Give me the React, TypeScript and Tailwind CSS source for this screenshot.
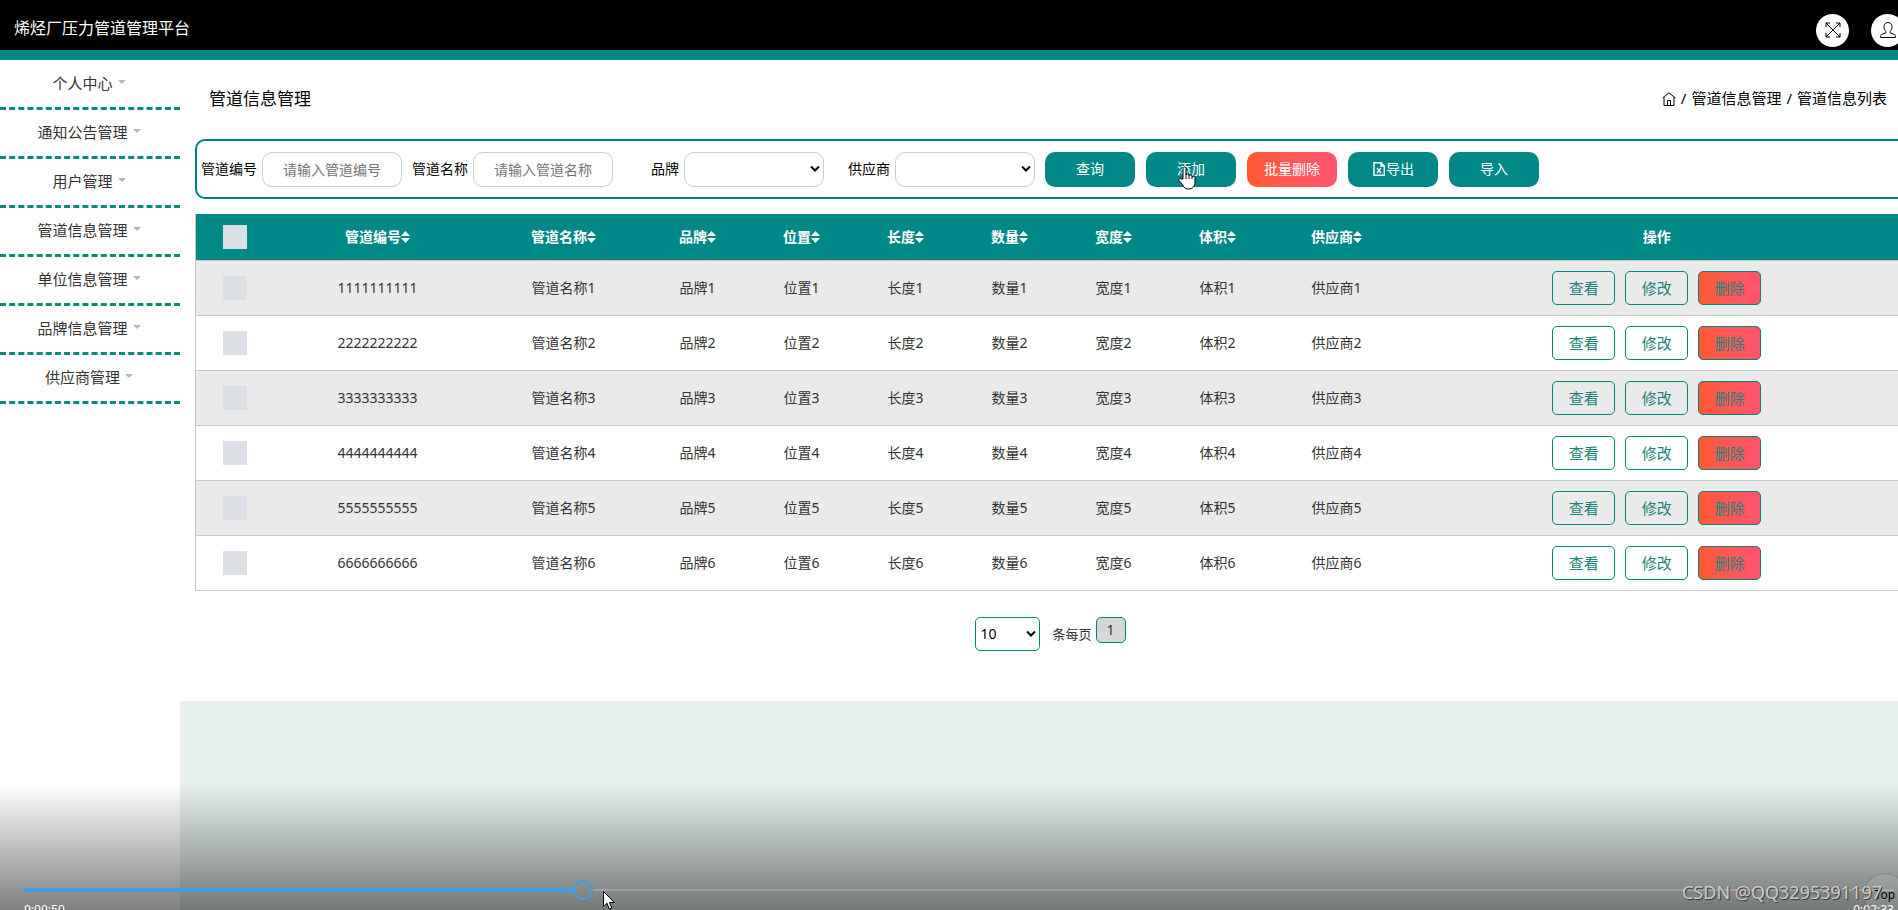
import { useState } from 'react';

const MENU = [
  '个人中心',
  '通知公告管理',
  '用户管理',
  '管道信息管理',
  '单位信息管理',
  '品牌信息管理',
  '供应商管理',
];

const COLUMNS = [
  { label: '管道编号', width: 'w-[208px]' },
  { label: '管道名称', width: 'w-[164px]' },
  { label: '品牌', width: 'w-[104px]' },
  { label: '位置', width: 'w-[104px]' },
  { label: '长度', width: 'w-[104px]' },
  { label: '数量', width: 'w-[104px]' },
  { label: '宽度', width: 'w-[104px]' },
  { label: '体积', width: 'w-[104px]' },
  { label: '供应商', width: 'w-[134px]' },
];

const ROWS = [1, 2, 3, 4, 5, 6];

const fieldClass = 'h-[35px] w-[140px] rounded-[10px] border border-[#ccc] bg-white text-sm';
const buttonClass =
  'flex h-[35px] w-[90px] items-center justify-center rounded-[10px] bg-[#008888] text-sm text-white';
const rowButtonClass =
  'h-[34px] w-[63px] rounded-[5px] border border-[#008578] text-[15px] leading-5 text-[#1c8379]';

const Caret = () => (
  <svg viewBox="0 0 8 4" className="mb-0.5 h-1 w-2 fill-[#b5b5b5]">
    <path d="M0 0h8L4 4z" />
  </svg>
);

const SortIcon = () => (
  <svg viewBox="0 0 9 12" className="h-3 w-[9px] fill-white">
    <path d="M4.5 0 9 5H0zM4.5 12 0 7h9z" />
  </svg>
);

const Chevron = () => (
  <svg
    viewBox="0 0 10 7"
    className="pointer-events-none absolute top-1/2 right-1 h-[7px] w-[10px] -translate-y-1/2 fill-none stroke-black stroke-2"
  >
    <path d="M1 1l4 4 4-4" />
  </svg>
);

const Header = () => (
  <header className="flex h-[60px] items-center justify-between border-b-10 border-[#008888] bg-black pl-3.5">
    <h1 className="pt-1.5 text-base text-white">烯烃厂压力管道管理平台</h1>
    <div className="-mr-1.5 flex shrink-0 gap-[22px] pt-[10px]">
      <button aria-label="全屏" className="flex size-[33px] items-center justify-center rounded-full bg-white">
        <svg viewBox="0 0 16 16" className="size-4 fill-none stroke-black">
          <path d="M1 5V1h4M11 1h4v4M15 11v4h-4M5 15H1v-4M1 1l14 14M15 1 1 15" />
        </svg>
      </button>
      <button aria-label="用户" className="flex size-[33px] items-center justify-center rounded-full bg-white">
        <svg viewBox="0 0 18 18" className="size-[18px] fill-none stroke-black">
          <path d="M7 10.5C5.500 9.500 5 7.500 5 5.500 5 3 6.500 1.500 9 1.500s4 1.500 4 4c0 2-.5 4-2 5v1.200l4.500 1.800c.9.400 1 1.500 1 3h-15c0-1.500.1-2.600 1-3L7 11.700z" />
        </svg>
      </button>
    </div>
  </header>
);

const Sidebar = () => (
  <nav className="w-[180px] shrink-0 bg-white pt-px">
    {MENU.map((item) => (
      <a
        key={item}
        href="#"
        className="flex h-[49px] items-center justify-center gap-[5px] border-b-3 border-dashed border-[#0b8a78] pr-0.5 pb-0.5 text-[15px] text-[#333]"
      >
        {item}
        <Caret />
      </a>
    ))}
  </nav>
);

const SearchBar = () => (
  <form className="flex h-[60px] items-center gap-[10px] rounded-[10px] border-2 border-[#008080] pl-1 text-sm">
    <div className="flex items-center">
      <label htmlFor="code" className="w-[61px] pr-[5px] text-right whitespace-nowrap">
        管道编号
      </label>
      <input
        id="code"
        placeholder="请输入管道编号"
        className={`${fieldClass} px-5 placeholder:text-[#757575]`}
      />
    </div>
    <div className="flex items-center">
      <label htmlFor="name" className="w-[61px] pr-[5px] text-right whitespace-nowrap">
        管道名称
      </label>
      <input
        id="name"
        placeholder="请输入管道名称"
        className={`${fieldClass} px-5 placeholder:text-[#757575]`}
      />
    </div>
    <div className="relative flex items-center">
      <label htmlFor="brand" className="w-[61px] pr-[5px] text-right">
        品牌
      </label>
      <select id="brand" className={`${fieldClass} appearance-none`} />
      <Chevron />
    </div>
    <div className="relative flex items-center">
      <label htmlFor="supplier" className="w-[61px] pr-[5px] text-right">
        供应商
      </label>
      <select id="supplier" className={`${fieldClass} appearance-none`} />
      <Chevron />
    </div>
    <div className="flex gap-[11px]">
      <button type="button" className={buttonClass}>
        查询
      </button>
      <button type="button" className={`${buttonClass} relative`}>
        添加
        <svg
          viewBox="0 0 18 24"
          className="absolute top-[14px] left-8 h-6 w-[18px] fill-white stroke-black"
        >
          <path d="M5 13V2.500C5 .5 8 .5 8 2.500V9c0-1.500 3-1.500 3 0v1c0-1.500 3-1.300 3 .2v1c0-1.400 3-1.200 3 .3V16c0 4-2 7-6.500 7-3.500 0-4.500-1.500-6-4.500L1 14.500c-.8-1.500 1-2.800 2.200-1.500z" />
          <path d="M8 9v4M11 10v3M14 11v2" />
        </svg>
      </button>
      <button
        type="button"
        className="flex h-[35px] w-[90px] items-center justify-center rounded-[10px] bg-linear-to-r from-[#ff5a2e] to-[#ff5470] text-sm text-white"
      >
        批量删除
      </button>
      <button type="button" className={buttonClass}>
        <svg viewBox="0 0 14 14" className="size-[14px] fill-none stroke-white stroke-[1.4]">
          <path d="M2 .7h7L12.300 4v9.300H2zM9 .7V4h3.300M5 6l4 5M9 6l-4 5" />
        </svg>
        导出
      </button>
      <button type="button" className={buttonClass}>
        导入
      </button>
    </div>
  </form>
);

const DataTable = () => (
  <table className="mt-[15px] w-full table-fixed border-collapse border-l border-[#c8c8c8] text-center text-sm">
    <thead>
      <tr className="h-[46px] border-b border-[#c8c8c8] bg-[#008888] text-white">
        <th className="w-[78px]">
          <input
            type="checkbox"
            aria-label="全选"
            className="block mx-auto size-6 appearance-none bg-[#dcdfe6]"
          />
        </th>
        {COLUMNS.map((col) => (
          <th key={col.label} className={col.width}>
            <span className="flex items-center justify-center">
              {col.label}
              <SortIcon />
            </span>
          </th>
        ))}
        <th>操作</th>
      </tr>
    </thead>
    <tbody className="text-[#333]">
      {ROWS.map((n) => (
        <tr key={n} className="h-[55px] border-b border-[#c8c8c8] odd:bg-[#eaeaea]">
          <td>
            <input
              type="checkbox"
              aria-label={`选择${n}`}
              className="block mx-auto size-6 appearance-none bg-[#dcdfe4]"
            />
          </td>
          {COLUMNS.map((col, i) => (
            <td key={col.label}>{i === 0 ? String(n).repeat(10) : `${col.label}${n}`}</td>
          ))}
          <td>
            <div className="flex justify-center gap-[10px] pt-px">
              <button className={rowButtonClass}>查看</button>
              <button className={rowButtonClass}>修改</button>
              <button className={`${rowButtonClass} bg-linear-to-r from-[#ff5a2e] to-[#ff5470]`}>
                删除
              </button>
            </div>
          </td>
        </tr>
      ))}
    </tbody>
  </table>
);

const Pagination = () => (
  <div className="mt-[26px] flex items-start justify-center pr-1 pb-[50px] text-[13px] text-[#333]">
    <div className="relative">
      <select
        aria-label="每页条数"
        className="h-[34px] w-[65px] appearance-none rounded-[5px] border border-[#008578] bg-white pl-1 text-sm text-black"
      >
        <option>10</option>
      </select>
      <Chevron />
    </div>
    <span className="ml-3 leading-[34px]">条每页</span>
    <button className="ml-1 h-[26px] w-[30px] rounded-[5px] border border-[#008578] bg-[#d6d6d6] text-sm leading-5">
      1
    </button>
  </div>
);

const PlayerBar = () => {
  const [position, setPosition] = useState(559);

  return (
    <div className="absolute inset-x-0 bottom-0 h-[126px] overflow-hidden bg-linear-to-b from-black/0 to-black/50 pr-1 pl-6">
      <input
        type="range"
        aria-label="播放进度"
        min={0}
        max={1870}
        value={position}
        onChange={(e) => setPosition(Number(e.target.value))}
        className="absolute inset-x-0 top-24 h-5 w-full opacity-0"
      />
      <div className="pointer-events-none flex h-5 translate-y-24 items-center">
        <div className="h-1 bg-[#409eea]" style={{ width: `${(position - 10) / 18.7}%` }} />
        <div className="size-5 shrink-0 rounded-full border-2 border-[#409eea]" />
        <div className="h-[2px] flex-1 bg-white/20" />
      </div>
      <div className="flex translate-y-24 justify-between pt-0.5 text-xs leading-4 text-white">
        <span>0:00:50</span>
        <span>0:02:33</span>
      </div>
      <svg
        viewBox="0 0 12 19"
        className="absolute top-[107px] left-[603px] h-[19px] w-3 fill-white stroke-black"
      >
        <path d="M.5.5v15l3.500-3.300L6.300 18l2.500-1-2.400-5.500h5z" />
      </svg>
    </div>
  );
};

export default function App() {
  return (
    <div
      className="relative flex h-screen flex-col overflow-hidden bg-white text-black"
      style={{ fontFamily: '"Noto Sans", "Noto Sans CJK SC", sans-serif' }}
    >
      <Header />
      <div className="flex min-h-0 flex-1">
        <Sidebar />
        <main className="-mr-3 min-w-0 flex-1 bg-[#e6f0ee]">
          <div className="bg-white pl-[15px]">
            <div className="flex h-[79px] items-center justify-between pr-[23px] pb-0.5 pl-[14px]">
              <h2 className="text-[17px]">管道信息管理</h2>
              <div className="flex items-center gap-[5px] text-[15px]">
                <svg viewBox="0 0 14 14" className="size-[14px] fill-none stroke-black">
                  <path d="M.5 6 7 .8 13.500 6M2 5v8.500h10V5M5.500 13.500V8.500h3v5" />
                </svg>
                <span>/</span>
                <a href="#">管道信息管理</a>
                <span>/</span>
                <a href="#">管道信息列表</a>
              </div>
            </div>
            <SearchBar />
            <DataTable />
            <Pagination />
          </div>
        </main>
      </div>
      <PlayerBar />
      <button className="absolute right-[-9px] bottom-[-7px] size-11 rounded-full border border-black/20 bg-white/10 text-xs text-black">
        Top
      </button>
      <p className="absolute right-4 bottom-1 text-lg leading-7 text-[#ccc] [text-shadow:1px_1px_1px_#333]">
        CSDN @QQ3295391197
      </p>
    </div>
  );
}
